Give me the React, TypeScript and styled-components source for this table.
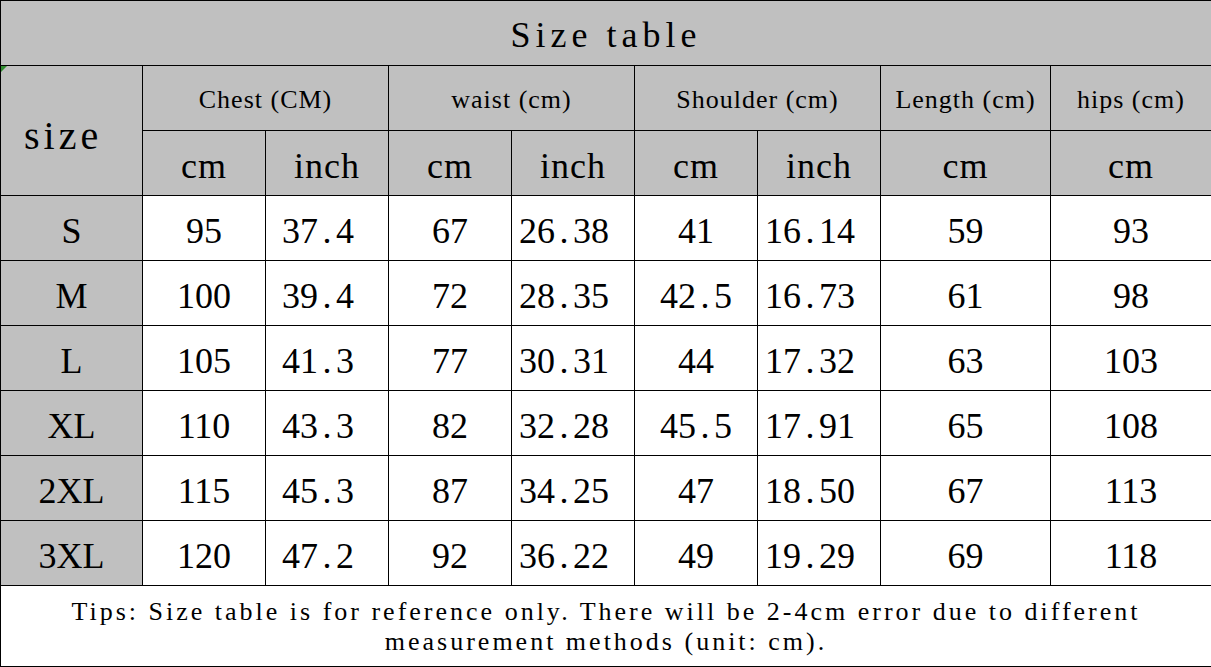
import React from "react";
import styled, { createGlobalStyle } from "styled-components";

const GlobalStyle = createGlobalStyle`
  html, body {
    margin: 0;
    padding: 0;
    background: #fff;
  }
  body {
    font-family: "Liberation Serif", "Times New Roman", serif;
    color: #000;
  }
`;

const GRAY = "#c0c0c0";

const Table = styled.table`
  width: 1211px;
  border-collapse: collapse;
  table-layout: fixed;
  font-family: "Liberation Serif", "Times New Roman", serif;
`;

const TitleCell = styled.th`
  height: 61px;
  padding: 3px 0 0;
  background: ${GRAY};
  border: 1px solid #000;
  font-size: 36px;
  font-weight: normal;
  letter-spacing: 5px;
  text-align: center;
  vertical-align: middle;
`;

const SizeHead = styled.th`
  position: relative;
  padding: 10px 0 0 23px;
  background: ${GRAY};
  border: 1px solid #000;
  font-size: 40px;
  font-weight: normal;
  letter-spacing: 4px;
  text-align: left;
  vertical-align: middle;
`;

// little green comment marker in the corner, as the spreadsheet shows it
const CommentMark = styled.span`
  position: absolute;
  left: 0;
  top: 0;
  width: 0;
  height: 0;
  border-top: 6px solid #2e8b2e;
  border-right: 6px solid transparent;
`;

const GroupHead = styled.th`
  height: 61px;
  padding: 3px 0 0;
  background: ${GRAY};
  border: 1px solid #000;
  font-size: 26px;
  font-weight: normal;
  letter-spacing: 1px;
  text-align: center;
  vertical-align: middle;
  white-space: nowrap;
`;

const UnitHead = styled.th`
  height: 58px;
  padding: 6px 0 0;
  background: ${GRAY};
  border: 1px solid #000;
  font-size: 36px;
  font-weight: normal;
  letter-spacing: 1px;
  text-align: center;
  vertical-align: middle;
`;

const SizeCell = styled.th`
  height: 58px;
  padding: 6px 0 0;
  background: ${GRAY};
  border: 1px solid #000;
  font-size: 36px;
  font-weight: normal;
  text-align: center;
  vertical-align: middle;
`;

const Cell = styled.td<{ $shift?: boolean }>`
  height: 58px;
  padding: 6px ${(p) => (p.$shift ? "18px" : "0")} 0 0;
  background: #fff;
  border: 1px solid #000;
  font-size: 36px;
  text-align: center;
  vertical-align: middle;
  white-space: nowrap;
`;

const Dot = styled.span`
  display: inline-block;
  width: 0.5em;
  text-align: center;
`;

const TipsCell = styled.td`
  height: 78px;
  padding: 2px 0 0;
  border: 1px solid #000;
  font-size: 26px;
  line-height: 30px;
  letter-spacing: 3px;
  text-align: center;
  vertical-align: middle;
  white-space: nowrap;
`;

type Row = {
  size: string;
  chestCm: string;
  chestIn: string;
  waistCm: string;
  waistIn: string;
  shoulderCm: string;
  shoulderIn: string;
  length: string;
  hips: string;
};

const rows: Row[] = [
  { size: "S", chestCm: "95", chestIn: "37.4", waistCm: "67", waistIn: "26.38", shoulderCm: "41", shoulderIn: "16.14", length: "59", hips: "93" },
  { size: "M", chestCm: "100", chestIn: "39.4", waistCm: "72", waistIn: "28.35", shoulderCm: "42.5", shoulderIn: "16.73", length: "61", hips: "98" },
  { size: "L", chestCm: "105", chestIn: "41.3", waistCm: "77", waistIn: "30.31", shoulderCm: "44", shoulderIn: "17.32", length: "63", hips: "103" },
  { size: "XL", chestCm: "110", chestIn: "43.3", waistCm: "82", waistIn: "32.28", shoulderCm: "45.5", shoulderIn: "17.91", length: "65", hips: "108" },
  { size: "2XL", chestCm: "115", chestIn: "45.3", waistCm: "87", waistIn: "34.25", shoulderCm: "47", shoulderIn: "18.50", length: "67", hips: "113" },
  { size: "3XL", chestCm: "120", chestIn: "47.2", waistCm: "92", waistIn: "36.22", shoulderCm: "49", shoulderIn: "19.29", length: "69", hips: "118" },
];

const colWidths = [142, 123, 123, 123, 123, 123, 123, 170, 161];

// the sheet font gives "." a full digit width, so pad it out
const Num: React.FC<{ v: string }> = ({ v }) => {
  const [whole, frac] = v.split(".");
  if (frac === undefined) return <>{v}</>;
  return (
    <>
      {whole}
      <Dot>.</Dot>
      {frac}
    </>
  );
};

const App: React.FC = () => {
  return (
    <>
      <GlobalStyle />
      <Table>
        <colgroup>
          {colWidths.map((w, i) => (
            <col key={i} width={w} />
          ))}
        </colgroup>
        <thead>
          <tr>
            <TitleCell colSpan={9}>Size table</TitleCell>
          </tr>
          <tr>
            <SizeHead rowSpan={2}>
              <CommentMark />
              size
            </SizeHead>
            <GroupHead colSpan={2}>Chest (CM)</GroupHead>
            <GroupHead colSpan={2}>waist (cm)</GroupHead>
            <GroupHead colSpan={2}>Shoulder (cm)</GroupHead>
            <GroupHead>Length (cm)</GroupHead>
            <GroupHead>hips (cm)</GroupHead>
          </tr>
          <tr>
            <UnitHead>cm</UnitHead>
            <UnitHead>inch</UnitHead>
            <UnitHead>cm</UnitHead>
            <UnitHead>inch</UnitHead>
            <UnitHead>cm</UnitHead>
            <UnitHead>inch</UnitHead>
            <UnitHead>cm</UnitHead>
            <UnitHead>cm</UnitHead>
          </tr>
        </thead>
        <tbody>
          {rows.map((r) => (
            <tr key={r.size}>
              <SizeCell>{r.size}</SizeCell>
              <Cell><Num v={r.chestCm} /></Cell>
              <Cell $shift><Num v={r.chestIn} /></Cell>
              <Cell><Num v={r.waistCm} /></Cell>
              <Cell $shift><Num v={r.waistIn} /></Cell>
              <Cell><Num v={r.shoulderCm} /></Cell>
              <Cell $shift><Num v={r.shoulderIn} /></Cell>
              <Cell><Num v={r.length} /></Cell>
              <Cell><Num v={r.hips} /></Cell>
            </tr>
          ))}
          <tr>
            <TipsCell colSpan={9}>
              Tips: Size table is for reference only. There will be 2-4cm error due to different
              <br />
              measurement methods (unit: cm).
            </TipsCell>
          </tr>
        </tbody>
      </Table>
    </>
  );
};

export default App;
